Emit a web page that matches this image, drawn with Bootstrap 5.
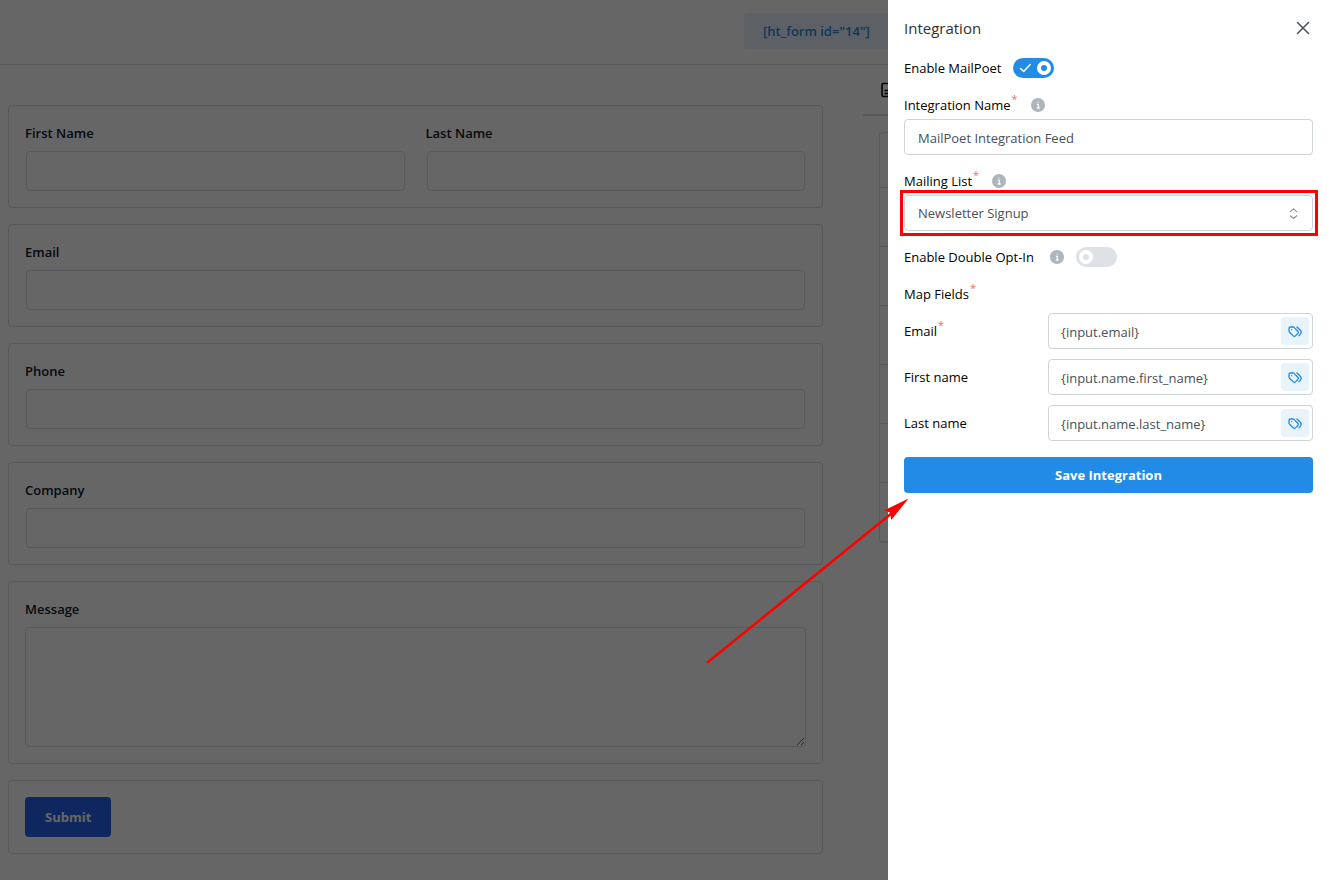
<!DOCTYPE html>
<html lang="en">
<head>
<meta charset="utf-8">
<meta name="viewport" content="width=device-width, initial-scale=1">
<title>Form integration</title>
<link href="https://cdn.jsdelivr.net/npm/bootstrap@5.3.0/dist/css/bootstrap.min.css" rel="stylesheet">
<style>
  body { font: 14px/24px "Open Sans", "Noto Sans", sans-serif; color: #111827; background: #fff; }

  /* builder page behind the drawer */
  .top-bar { height: 65px; border-bottom: 1px solid #dcdfe6; padding-right: 423px; padding-bottom: 2px; }
  .shortcode { width: 160px; height: 36px; padding: 0 19px; border: 0; border-radius: 4px; background: #e9f3fd; color: #228be6; font-weight: 600; font-size: 13px; text-align: left; white-space: nowrap; }
  .builder { gap: 40px; padding-left: 8px; }
  .canvas { padding: 40px 0 26px; gap: 16px; min-width: 0; }
  .form-block { border: 1px solid #dcdfe6; border-radius: 4px; padding: 16px; }
  .form-block label { font-size: 13px; font-weight: 600; line-height: 23px; margin-bottom: 6px; }
  .pair { display: grid; grid-template-columns: 1fr 1fr; gap: 20px; }
  .form-block .form-control { border-color: #dcdfe6; border-radius: 4px; font-size: 14px; background: transparent; }
  .one-line { padding: 0 1px; }
  .one-line .form-control { height: 40px; }
  .form-block textarea.form-control { height: 120px; }
  .submit-btn { height: 40px; padding: 0 20px; border: 0; border-radius: 4px; background: #2563eb; color: #fff; font-size: 13px; font-weight: 700; }
  .side { flex: 0 0 464px; }
  .side-tabs { height: 51px; border-bottom: 2px solid #dcdfe6; padding: 17px 18px 0; color: #000; }
  .side-list { margin: 16px 16px 0; border: 1px solid #dcdfe6; border-bottom-width: 2px; border-radius: 4px; }
  .side-list li { height: 59px; border-top: 1px solid #dcdfe6; }
  .side-list li:first-child { height: 54px; border-top: 0; }
  .offcanvas-backdrop.show { opacity: .6; }

  /* drawer */
  .drawer.offcanvas { --bs-offcanvas-width: 439px; border: 0; color: #000; padding: 16px 14px 0 16px; font-size: 13px; }
  .drawer-title { font-size: 15px; line-height: 25px; font-weight: 400; color: #303133; margin: 0; }
  .close-btn { border: 0; background: none; padding: 0; width: 20px; height: 24px; color: #495057; }
  .drawer form { padding-top: 15px; }
  .toggle-row { display: flex; align-items: center; height: 24px; gap: 12px; margin-bottom: 13px; }
  .caption { display: flex; align-items: center; height: 24px; margin-bottom: 2px; }
  .field { margin-bottom: 14px; }
  .must::after { content: "*"; color: #f56c6c; font-size: 11px; line-height: 12px; vertical-align: 7px; margin-left: 1px; }
  .info-dot { width: 14px; height: 14px; margin-left: 13px; flex: none; }
  .toggle-row .info-dot { margin-left: 4px; }
  .drawer .form-control, .drawer .form-select { height: 36px; border: 1px solid #ced4da; border-radius: 4px; padding: 1px 13px 0; font-size: 13px; color: #495057; background-color: #fff; }
  .drawer .form-select { background-image: url("data:image/svg+xml,%3Csvg xmlns='http://www.w3.org/2000/svg' viewBox='0 0 12 14' fill='none' stroke='%23868e96' stroke-width='1.2' stroke-linecap='round' stroke-linejoin='round'%3E%3Cpath d='M2.500 5 6 2 9.500 5M2.500 9.500 6 12.500 9.500 9.500'/%3E%3C/svg%3E"); background-size: 11px 13px; background-position: right 13px center; }
  .switch { appearance: none; width: 41px; height: 20px; border-radius: 10px; margin: 0; background: #dee2e6 url("data:image/svg+xml,%3Csvg xmlns='http://www.w3.org/2000/svg' viewBox='0 0 41 20'%3E%3Ccircle cx='10' cy='10' r='7' fill='%23fff'/%3E%3Ccircle cx='10' cy='10' r='3' fill='%23dee2e6'/%3E%3C/svg%3E") center / 41px 20px no-repeat; }
  .switch:checked { background-color: #228be6; background-image: url("data:image/svg+xml,%3Csvg xmlns='http://www.w3.org/2000/svg' viewBox='0 0 41 20'%3E%3Ccircle cx='31' cy='10' r='7' fill='%23fff'/%3E%3Ccircle cx='31' cy='10' r='3' fill='%23228be6'/%3E%3Cpath d='M7.500 10.500l3.200 3 6.500-7' fill='none' stroke='%23fff' stroke-width='1.600' stroke-linecap='round' stroke-linejoin='round'/%3E%3C/svg%3E"); }
  .marker { position: absolute; inset: -5px -5px -5px -4px; border: 3px solid #f00; pointer-events: none; }
  .map-caption { margin-bottom: 7px; }
  .map-row { display: grid; grid-template-columns: 144px 1fr; align-items: center; margin-bottom: 10px; }
  .map-row .form-control { padding-left: 12px; padding-right: 40px; }
  .tag-btn { position: absolute; top: 4px; right: 4px; width: 28px; height: 28px; border: 0; border-radius: 4px; padding: 0; background: #e9f3fc; color: #228be6; display: grid; place-items: center; }
  .save-btn { height: 36px; margin-top: 6px; border: 0; border-radius: 4px; background: #228be6; color: #fff; font-size: 13px; font-weight: 700; padding: 0; }
  .pointer-arrow { position: absolute; left: -184px; top: 495px; width: 206px; height: 170px; pointer-events: none; }
</style>
</head>
<body>
<svg class="d-none" aria-hidden="true">
  <symbol id="tags" viewBox="0 0 24 24"><g fill="none" stroke="currentColor" stroke-width="2" stroke-linecap="round" stroke-linejoin="round"><path d="M3 8v4.172a2 2 0 0 0 .586 1.414l5.710 5.710a2.410 2.410 0 0 0 3.408 0l3.592-3.592a2.410 2.410 0 0 0 0-3.408l-5.710-5.710A2 2 0 0 0 9.172 6H5a2 2 0 0 0-2 2"/><path d="M18 19l1.592-1.592a4.820 4.820 0 0 0 0-6.816L15 6M7 10h-.01"/></g></symbol>
  <symbol id="info" viewBox="0 0 14 14"><circle cx="7" cy="7" r="7" fill="#adb5bd"/><path d="M6 6.300h1.400v3.600M5.800 10h3M7 3.800v.6" fill="none" stroke="#fff" stroke-width="1.300"/></symbol>
</svg>

<header class="top-bar d-flex align-items-center justify-content-end">
  <button type="button" class="shortcode">[ht_form id="14"]</button>
</header>

<main class="builder d-flex">
  <form class="canvas d-flex flex-column flex-grow-1">
    <div class="form-block pair">
      <div><label class="d-block" for="fn">First Name</label><div class="one-line"><input id="fn" class="form-control"></div></div>
      <div><label class="d-block" for="ln">Last Name</label><div class="one-line"><input id="ln" class="form-control"></div></div>
    </div>
    <div class="form-block"><label class="d-block" for="em">Email</label><div class="one-line"><input id="em" type="email" class="form-control"></div></div>
    <div class="form-block"><label class="d-block" for="ph">Phone</label><div class="one-line"><input id="ph" type="tel" class="form-control"></div></div>
    <div class="form-block"><label class="d-block" for="co">Company</label><div class="one-line"><input id="co" class="form-control"></div></div>
    <div class="form-block"><label class="d-block" for="ms">Message</label><textarea id="ms" class="form-control d-block"></textarea></div>
    <div class="form-block"><button type="button" class="submit-btn d-block">Submit</button></div>
  </form>
  <aside class="side">
    <div class="side-tabs">
      <svg class="d-block" width="14" height="16" viewBox="0 0 14 16" fill="none" stroke="currentColor" stroke-width="1.500"><path d="M2.500 1.500h6l4 4v9h-10q-1.500 0-1.500-1.500V3q0-1.500 1.500-1.500zM8 1.500V6h4.500M3.500 8.500h7M3.500 11.500h7"/></svg>
    </div>
    <ul class="side-list list-unstyled"><li></li><li></li><li></li><li></li><li></li><li></li><li></li></ul>
  </aside>
</main>

<div class="offcanvas-backdrop show"></div>

<section class="drawer offcanvas offcanvas-end show" tabindex="-1" aria-labelledby="drawerTitle" data-bs-backdrop="false" data-bs-scroll="true">
  <div class="d-flex justify-content-between">
    <h2 class="drawer-title" id="drawerTitle">Integration</h2>
    <button type="button" class="close-btn" aria-label="Close"><svg class="d-block m-auto" width="14" height="14" viewBox="0 0 14 14" stroke="currentColor" stroke-width="1.500" stroke-linecap="round"><path d="M1.500 1.500l11 11M12.500 1.500l-11 11"/></svg></button>
  </div>
  <form>
    <div class="toggle-row"><label for="enable">Enable MailPoet</label><input type="checkbox" role="switch" class="switch" id="enable" checked></div>
    <div class="field">
      <div class="caption"><label class="must" for="iname">Integration Name</label><svg class="info-dot"><use href="#info"/></svg></div>
      <input id="iname" class="form-control" value="MailPoet Integration Feed">
    </div>
    <div class="field">
      <div class="caption"><label class="must" for="mlist">Mailing List</label><svg class="info-dot"><use href="#info"/></svg></div>
      <div class="position-relative"><select id="mlist" class="form-select"><option>Newsletter Signup</option></select><span class="marker"></span></div>
    </div>
    <div class="toggle-row"><label for="optin">Enable Double Opt-In</label><svg class="info-dot"><use href="#info"/></svg><input type="checkbox" role="switch" class="switch" id="optin"></div>
    <div class="caption map-caption"><span class="must">Map Fields</span></div>
    <div class="map-row"><label class="must" for="m1">Email</label><div class="position-relative"><input id="m1" class="form-control" value="{input.email}"><button type="button" class="tag-btn" aria-label="Insert tag"><svg width="16" height="16"><use href="#tags"/></svg></button></div></div>
    <div class="map-row"><label for="m2">First name</label><div class="position-relative"><input id="m2" class="form-control" value="{input.name.first_name}"><button type="button" class="tag-btn" aria-label="Insert tag"><svg width="16" height="16"><use href="#tags"/></svg></button></div></div>
    <div class="map-row"><label for="m3">Last name</label><div class="position-relative"><input id="m3" class="form-control" value="{input.name.last_name}"><button type="button" class="tag-btn" aria-label="Insert tag"><svg width="16" height="16"><use href="#tags"/></svg></button></div></div>
    <button type="button" class="save-btn w-100">Save Integration</button>
  </form>
  <svg class="pointer-arrow" viewBox="704 495 206 170" aria-hidden="true"><path d="M708 662L892 513" stroke="#f00" stroke-width="2.600" stroke-linecap="round"/><path d="M908.500 498.500L884 510.500l6 2 1.300 7.500z" fill="#f00"/></svg>
</section>
<script src="https://cdn.jsdelivr.net/npm/bootstrap@5.3.0/dist/js/bootstrap.bundle.min.js"></script>
</body>
</html>
